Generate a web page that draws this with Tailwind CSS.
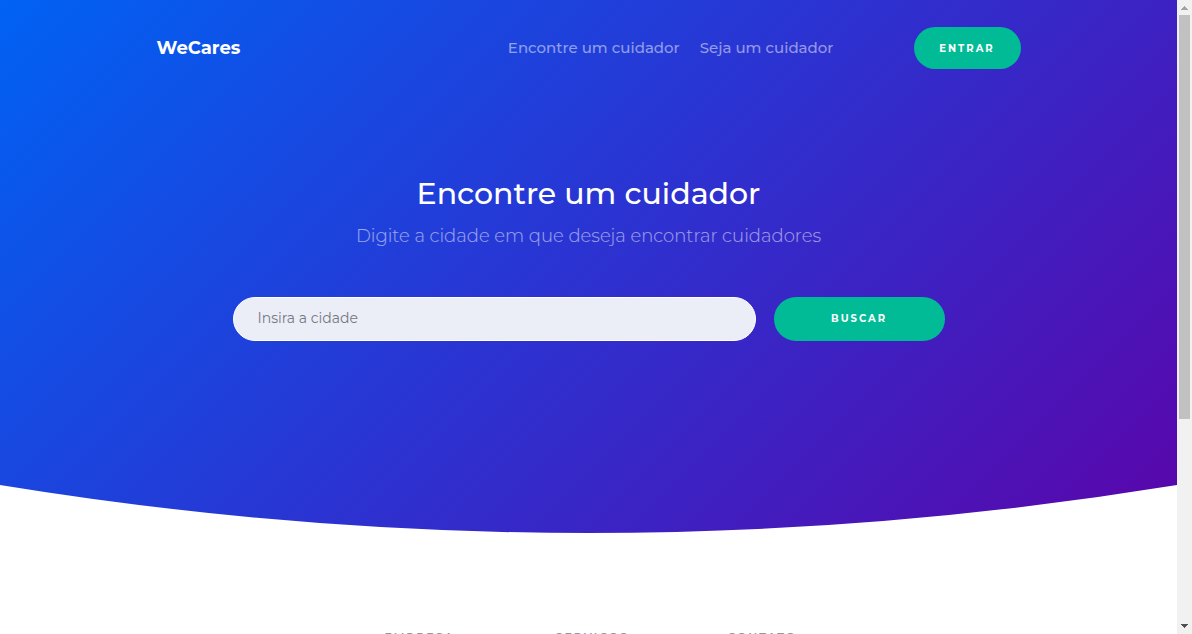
<!DOCTYPE html>
<html lang="pt-BR">
<head>
<meta charset="utf-8">
<meta name="viewport" content="width=device-width, initial-scale=1">
<title>WeCares</title>
<script src="https://cdn.jsdelivr.net/npm/@tailwindcss/browser@4"></script>
</head>
<body class="flex h-screen overflow-hidden bg-white font-['Metropolis','Montserrat','Inter',sans-serif] text-white">
  <div class="min-w-0 flex-1">
    <div class="relative bg-[linear-gradient(135deg,#0062f3,#2a34d2_48%,#5a05aa)] pb-48">
      <header class="mx-auto flex max-w-[864px] items-center pt-[27px]">
        <a href="#" class="text-lg font-bold leading-10">WeCares</a>
        <nav class="ml-auto flex gap-5 text-[15px] font-medium text-white/50">
          <a href="#">Encontre um cuidador</a>
          <a href="#">Seja um cuidador</a>
        </nav>
        <a href="#" class="ml-20 flex h-[42px] w-[107px] items-center justify-center rounded-full bg-[#00bb95] text-[10px] font-bold tracking-[2px]">ENTRAR</a>
      </header>
      <main class="mx-auto max-w-[712px] pt-[101px] text-center">
        <h1 class="text-3xl font-medium leading-12">Encontre um cuidador</h1>
        <p class="text-lg font-light leading-9 text-white/55">Digite a cidade em que deseja encontrar cuidadores</p>
        <form class="mt-[43px] flex gap-[18px]">
          <input type="text" aria-label="Cidade" placeholder="Insira a cidade" class="h-11 min-w-0 flex-1 rounded-full border border-white bg-[#ebeef7] px-6 pb-0.5 text-sm text-gray-700 placeholder:text-[#757982]">
          <button type="button" class="h-11 w-[171px] rounded-full bg-[#00bb95] pb-0.5 text-[10px] font-bold tracking-[2px]">BUSCAR</button>
        </form>
      </main>
      <svg class="absolute inset-x-0 bottom-0 h-12 w-full" viewBox="0 0 1177 48" preserveAspectRatio="none" aria-hidden="true">
        <path fill="#fff" d="M0 0Q588.500 96 1177 0V49H0Z"/>
      </svg>
    </div>
    <footer class="mx-auto grid max-w-[712px] grid-cols-[152px_171px_172px_1fr] pt-24 text-[11px] font-semibold leading-4 tracking-[2px] text-[#8f95a8]">
      <h2 class="col-start-2">EMPRESA</h2>
      <h2>SERVICOS</h2>
      <h2>CONTATO</h2>
    </footer>
  </div>
  <div class="flex w-[15px] shrink-0 flex-col items-center bg-[#f1f1f1]" aria-hidden="true">
    <svg class="h-[15px] w-[15px] shrink-0" viewBox="0 0 15 15"><path fill="#a3a3a3" d="M7 6h1v1h1v1h1v1h1v1H4V9h1V8h1V7h1z"/></svg>
    <div class="h-[404px] w-[11px] shrink-0 bg-[#c1c1c1]"></div>
    <svg class="mt-auto h-[15px] w-[15px] shrink-0" viewBox="0 0 15 15"><path fill="#505050" d="M4 5h7v1h-1v1H9v1H8v1H7V8H6V7H5V6H4z"/></svg>
  </div>
</body>
</html>
